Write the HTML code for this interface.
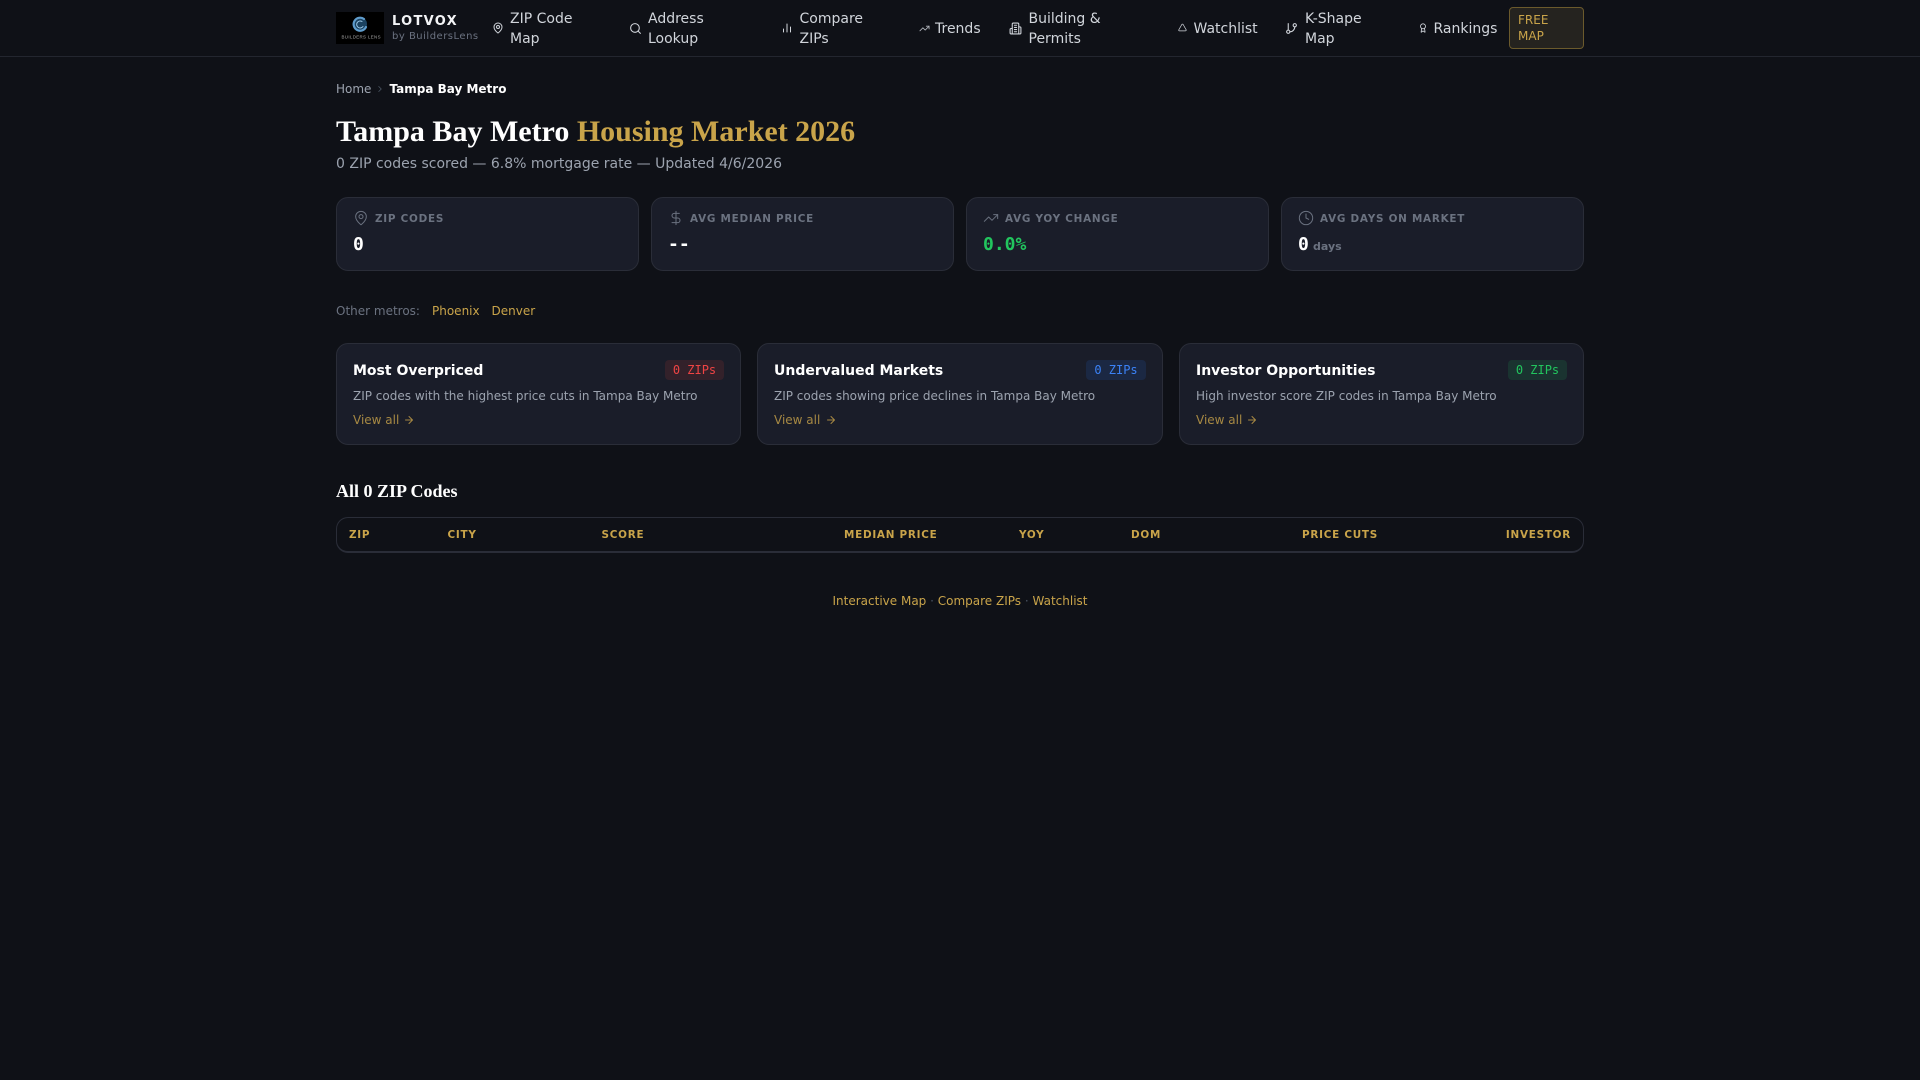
<!DOCTYPE html>
<html><head><meta charset="utf-8"><title>Tampa Bay Metro Housing Market 2026</title>
<style>
*{box-sizing:border-box;margin:0;padding:0}
html,body{width:1920px;height:1080px;background:#0f1117;overflow:hidden;font-family:"DejaVu Sans",sans-serif;color:#fff}
.a{position:absolute;white-space:nowrap}
svg{position:absolute;fill:none;stroke-linecap:round;stroke-linejoin:round;stroke-width:2}
.nav{font-size:14px;line-height:20px;color:#d1d5db}
.nav svg{stroke:#d1d5db}
.card{position:absolute;background:#1a1d29;border:1px solid #2a2d38;border-radius:12px}
.lab{font-size:10.4px;font-weight:700;letter-spacing:.75px;color:#6b7280;line-height:14px;top:211.500px}
.val{font-family:"DejaVu Sans Mono",monospace;font-weight:700;font-size:18px;line-height:28px;top:231px}
.ct{font-size:14px;font-weight:700;line-height:20px;top:361px}
.cd{font-size:12px;color:#9ca3af;line-height:16px;top:388px}
.va{font-size:12px;color:#c9a44acc;line-height:16px;top:412px}
.bd{position:absolute;top:360px;height:20px;border-radius:4px;font:12px/20px "DejaVu Sans Mono",monospace;text-align:center}
.th{font-size:10.4px;font-weight:700;letter-spacing:.75px;color:#c9a44a;line-height:14px;top:527.500px}
.gold{color:#c9a44a}
</style></head><body>
<div class="a" style="left:0;top:56px;width:1920px;height:1px;background:#23262f"></div>

<svg style="left:336px;top:12px;stroke-width:1" width="48" height="32" viewBox="0 0 48 32"><rect width="48" height="32" fill="#000" stroke="none"/><circle cx="24" cy="12" r="7" fill="#1b4260" stroke="none"/><path d="M28 7a6.500 6.500 0 1 0 2 8" stroke="#5f9ccc" stroke-width="2.200"/><path d="M26 9.500a3.500 3.500 0 1 0 1 5" stroke="#9cc8e6" stroke-width="1"/><text x="25" y="26.500" fill="#a6a6a6" stroke="none" font-family="Liberation Sans" font-size="4.400" text-anchor="middle" textLength="39">BUILDERS LENS</text></svg>
<div class="a" style="left:392px;top:14px;font-size:13px;font-weight:700;letter-spacing:1.300px;line-height:16px;color:#f3f4f6">LOTVOX</div>
<div class="a" style="left:392px;top:29.500px;font-size:10px;letter-spacing:.500px;line-height:14px;color:#6b7280">by BuildersLens</div>

<div class="nav a" style="left:510px;top:9px">ZIP Code<br>Map</div>
<svg style="left:491.500px;top:21.500px" width="12" height="12" viewBox="0 0 24 24" stroke="#d1d5db"><path d="M20 10c0 5-5.500 10.200-7.400 11.800a1 1 0 0 1-1.200 0C9.500 20.200 4 15 4 10a8 8 0 0 1 16 0"/><circle cx="12" cy="10" r="3"/></svg>
<div class="nav a" style="left:648px;top:9px">Address<br>Lookup</div>
<svg style="left:629px;top:22px" width="13" height="13" viewBox="0 0 24 24" stroke="#d1d5db"><path d="m21 21-4.300-4.300"/><circle cx="11" cy="11" r="8"/></svg>
<div class="nav a" style="left:799.500px;top:9px">Compare<br>ZIPs</div>
<svg style="left:781px;top:22px" width="12" height="12" viewBox="0 0 24 24" stroke="#d1d5db"><path d="M5 20v-6M12 20V4M19 20v-10"/></svg>
<div class="nav a" style="left:935px;top:19px">Trends</div>
<svg style="left:918.500px;top:22.500px;stroke-width:1.800" width="11" height="11" viewBox="0 0 24 24" stroke="#b4b8bf"><path d="M16 7h6v6"/><path d="m22 7-8.500 8.500-5-5L2 17"/></svg>
<div class="nav a" style="left:1028.500px;top:9px">Building &amp;<br>Permits</div>
<svg style="left:1009px;top:21.500px" width="13" height="13" viewBox="0 0 24 24" stroke="#d1d5db"><path d="M6 22V4a2 2 0 0 1 2-2h8a2 2 0 0 1 2 2v18Z"/><path d="M6 12H4a2 2 0 0 0-2 2v6a2 2 0 0 0 2 2h2M18 9h2a2 2 0 0 1 2 2v9a2 2 0 0 1-2 2h-2M10 6h4M10 10h4M10 14h4M10 18h4"/></svg>
<div class="nav a" style="left:1193.500px;top:19px">Watchlist</div>
<svg style="left:1178px;top:23px;stroke-width:2" width="9" height="9" viewBox="0 0 24 24" stroke="#d1d5db"><path d="m21.700 18-8-14a2 2 0 0 0-3.500 0l-8 14A2 2 0 0 0 4 21h16a2 2 0 0 0 1.700-3"/></svg>
<div class="nav a" style="left:1305px;top:9px">K-Shape<br>Map</div>
<svg style="left:1284.500px;top:21.500px" width="13" height="13" viewBox="0 0 24 24" stroke="#d1d5db"><path d="M6 3v12"/><circle cx="18" cy="6" r="3"/><circle cx="6" cy="18" r="3"/><path d="M18 9a9 9 0 0 1-9 9"/></svg>
<div class="nav a" style="left:1433.500px;top:19px">Rankings</div>
<svg style="left:1417.500px;top:22.500px" width="10" height="10" viewBox="0 0 24 24" stroke="#d1d5db"><path d="m15.500 12.900 1.500 8.600a.5.500 0 0 1-.8.500l-3.600-2.700a1 1 0 0 0-1.200 0L8.200 22a.5.500 0 0 1-.8-.5l1.500-8.600"/><circle cx="12" cy="8" r="6"/></svg>
<div class="a" style="left:1509px;top:7px;width:75px;height:42px;background:#25231f;border:1px solid #6b5a2c;border-radius:4px"></div>
<div class="a gold" style="left:1518px;top:12px;font-size:12px;line-height:16px">FREE<br>MAP</div>

<div class="a" style="left:336px;top:81px;font-size:12px;line-height:16px;color:#9ca3af">Home</div>
<svg style="left:374.500px;top:84px" width="10" height="10" viewBox="0 0 24 24" stroke="#4b5563"><path d="m9 18 6-6-6-6"/></svg>
<div class="a" style="left:389.500px;top:81px;font-size:12px;font-weight:700;line-height:16px;color:#fff">Tampa Bay Metro</div>

<div class="a" style="left:336px;top:114px;font:700 30px/36px 'Liberation Serif',serif;color:#fff">Tampa Bay Metro <span class="gold">Housing Market 2026</span></div>
<div class="a" style="left:336px;top:154px;font-size:14px;line-height:20px;color:#9ca3af">0 ZIP codes scored — 6.8% mortgage rate — Updated 4/6/2026</div>

<div class="card" style="left:336px;top:197px;width:303px;height:74px"></div>
<div class="card" style="left:651px;top:197px;width:303px;height:74px"></div>
<div class="card" style="left:966px;top:197px;width:303px;height:74px"></div>
<div class="card" style="left:1281px;top:197px;width:303px;height:74px"></div>

<svg style="left:353px;top:210px;stroke-width:1.500" width="16" height="16" viewBox="0 0 24 24" stroke="#6b7280"><path d="M20 10c0 5-5.500 10.200-7.400 11.800a1 1 0 0 1-1.200 0C9.500 20.200 4 15 4 10a8 8 0 0 1 16 0"/><circle cx="12" cy="10" r="3"/></svg>
<div class="a lab" style="left:375px">ZIP CODES</div>
<div class="a val" style="left:353px">0</div>
<svg style="left:668px;top:210px;stroke-width:1.500" width="16" height="16" viewBox="0 0 24 24" stroke="#6b7280"><path d="M12 2v20M17 5H9.500a3.500 3.500 0 0 0 0 7h5a3.500 3.500 0 0 1 0 7H6"/></svg>
<div class="a lab" style="left:690px">AVG MEDIAN PRICE</div>
<div class="a val" style="left:668px">--</div>
<svg style="left:983px;top:210px;stroke-width:1.500" width="16" height="16" viewBox="0 0 24 24" stroke="#6b7280"><path d="M16 7h6v6"/><path d="m22 7-8.500 8.500-5-5L2 17"/></svg>
<div class="a lab" style="left:1005px">AVG YOY CHANGE</div>
<div class="a val" style="left:983px;color:#22c55e">0.0%</div>
<svg style="left:1298px;top:210px;stroke-width:1.500" width="16" height="16" viewBox="0 0 24 24" stroke="#6b7280"><circle cx="12" cy="12" r="10"/><path d="M12 6v6l4 2"/></svg>
<div class="a lab" style="left:1320px">AVG DAYS ON MARKET</div>
<div class="a val" style="left:1298px">0</div>
<div class="a" style="left:1313px;top:238.500px;font-size:11px;font-weight:700;line-height:16px;color:#6b7280">days</div>

<div class="a" style="left:336px;top:303px;font-size:12px;line-height:16px;color:#6b7280">Other metros:</div>
<div class="a gold" style="left:432px;top:303px;font-size:12px;line-height:16px">Phoenix</div>
<div class="a gold" style="left:491.500px;top:303px;font-size:12px;line-height:16px">Denver</div>

<div class="card" style="left:336px;top:343px;width:405px;height:102px"></div>
<div class="card" style="left:757px;top:343px;width:406px;height:102px"></div>
<div class="card" style="left:1179px;top:343px;width:405px;height:102px"></div>

<div class="a ct" style="left:353px">Most Overpriced</div>
<div class="bd" style="left:665px;width:59px;background:#33212a;color:#ef4444">0 ZIPs</div>
<div class="a cd" style="left:353px">ZIP codes with the highest price cuts in Tampa Bay Metro</div>
<div class="a va" style="left:353px">View all</div>
<svg style="left:403px;top:414px" width="12" height="12" viewBox="0 0 24 24" stroke="#c9a44acc"><path d="M5 12h14M12 5l7 7-7 7"/></svg>

<div class="a ct" style="left:774px">Undervalued Markets</div>
<div class="bd" style="left:1086px;width:60px;background:#1b2843;color:#3b82f6">0 ZIPs</div>
<div class="a cd" style="left:774px">ZIP codes showing price declines in Tampa Bay Metro</div>
<div class="a va" style="left:774px">View all</div>
<svg style="left:825px;top:414px" width="12" height="12" viewBox="0 0 24 24" stroke="#c9a44acc"><path d="M5 12h14M12 5l7 7-7 7"/></svg>

<div class="a ct" style="left:1196px">Investor Opportunities</div>
<div class="bd" style="left:1508px;width:59px;background:#1a3330;color:#22c55e">0 ZIPs</div>
<div class="a cd" style="left:1196px">High investor score ZIP codes in Tampa Bay Metro</div>
<div class="a va" style="left:1196px">View all</div>
<svg style="left:1246px;top:414px" width="12" height="12" viewBox="0 0 24 24" stroke="#c9a44acc"><path d="M5 12h14M12 5l7 7-7 7"/></svg>

<div class="a" style="left:336px;top:477px;font:700 18px/28px 'Liberation Serif',serif;color:#fff">All 0 ZIP Codes</div>

<div class="a" style="left:336px;top:517px;width:1248px;height:36px;border:1px solid #2a2d38;border-bottom-width:2px;border-radius:12px"></div>
<div class="a th" style="left:349px">ZIP</div>
<div class="a th" style="left:447.500px">CITY</div>
<div class="a th" style="left:601.500px">SCORE</div>
<div class="a th" style="right:982.500px">MEDIAN PRICE</div>
<div class="a th" style="left:1019px">YOY</div>
<div class="a th" style="left:1131px">DOM</div>
<div class="a th" style="right:542px">PRICE CUTS</div>
<div class="a th" style="right:349px">INVESTOR</div>

<div class="a" style="left:0;top:593px;width:1920px;text-align:center;font-size:12px;line-height:16px;color:#4b5563"><span class="gold">Interactive Map</span> · <span class="gold">Compare ZIPs</span> · <span class="gold">Watchlist</span></div>
</body></html>
